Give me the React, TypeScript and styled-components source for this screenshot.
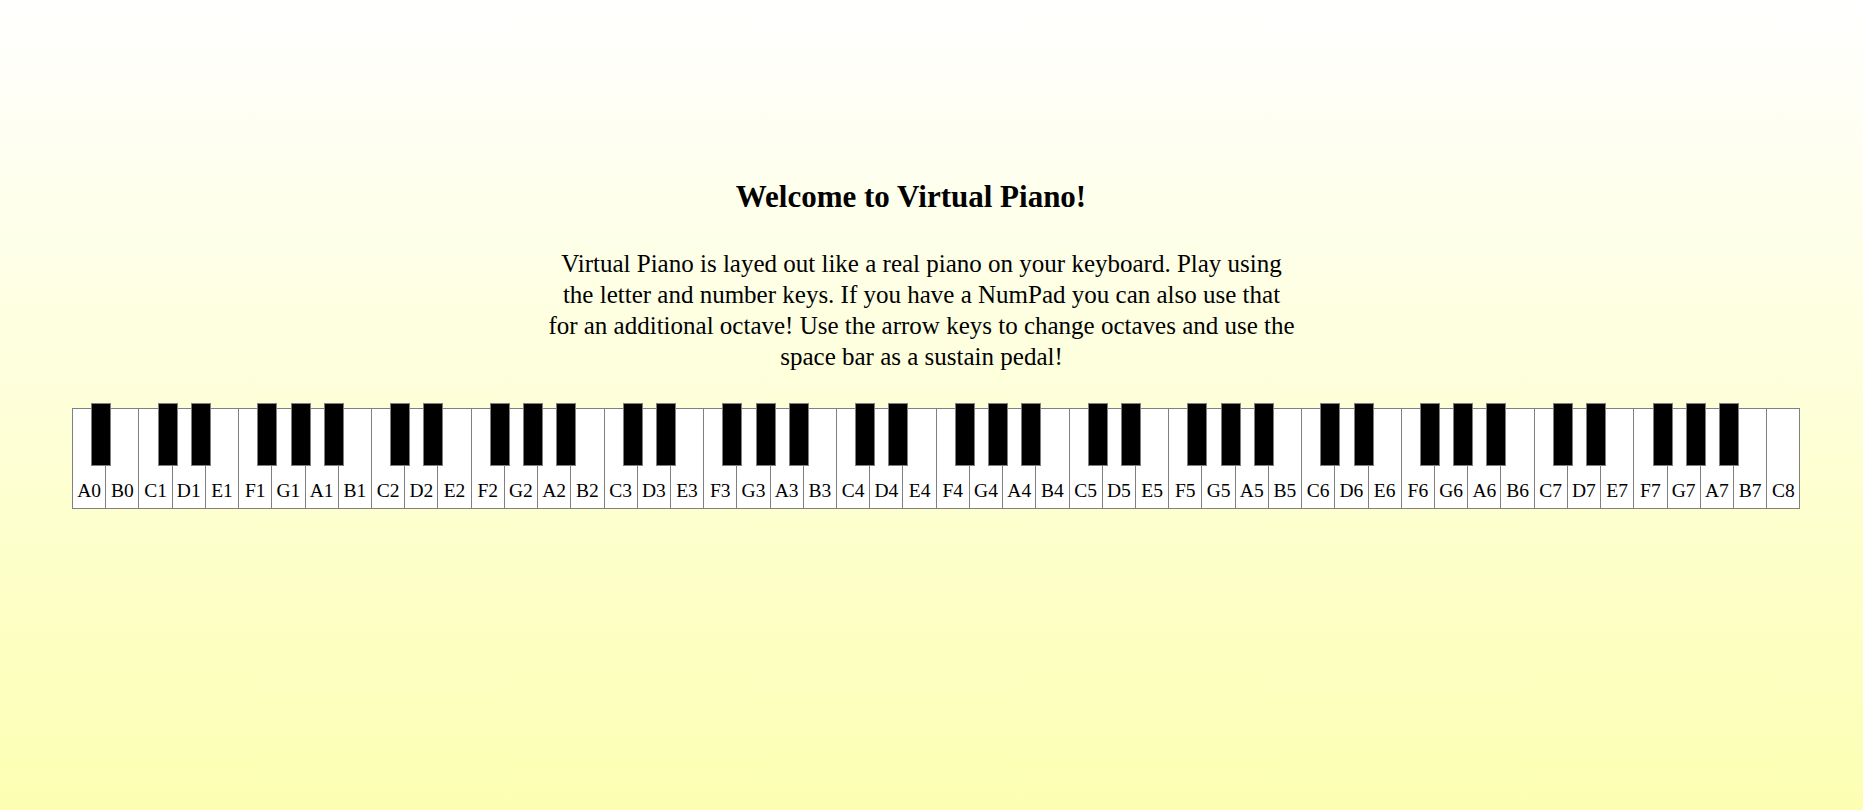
import React from "react";
import styled, { createGlobalStyle } from "styled-components";

const GlobalStyle = createGlobalStyle`
  html, body {
    margin: 0;
    padding: 0;
  }
  body {
    font-family: "Liberation Serif", "Times New Roman", serif;
    color: #000;
    background: #fcffb2;
  }
`;

const Page = styled.div`
  min-height: 100vh;
  box-sizing: border-box;
  padding-top: 179px;
  background: linear-gradient(to bottom, #ffffff 0%, #fcffb2 100%);
  display: flex;
  flex-direction: column;
`;

const Intro = styled.section`
  width: 749px;
  margin-left: 547px;
  display: flex;
  flex-direction: column;
`;

const Title = styled.h2`
  margin: 0;
  padding-right: 21px;
  font-size: 31px;
  font-weight: bold;
  text-align: center;
`;

const Description = styled.p`
  margin: 33px 0 0;
  font-size: 25px;
  line-height: 31px;
  text-align: center;
`;

const Keyboard = styled.div`
  margin: 36px 0 0 72px;
  width: 1728px;
  height: 101px;
  display: flex;
`;

const WhiteKey = styled.div<{ $last?: boolean }>`
  position: relative;
  flex: 1 1 0;
  box-sizing: border-box;
  background: #ffffff;
  border: 1px solid #808080;
  border-right: ${(p) => (p.$last ? "1px solid #808080" : "none")};
  display: flex;
  align-items: flex-end;
  justify-content: center;
  padding-bottom: 6px;
`;

const Label = styled.span`
  font-size: 19.5px;
  line-height: normal;
  white-space: nowrap;
`;

const BlackKey = styled.div`
  position: absolute;
  top: -6px;
  left: calc(100% - 14px);
  width: 20px;
  height: 63px;
  box-sizing: border-box;
  background: #000000;
  border: 1px solid #808080;
  z-index: 1;
`;

const letters = ["C", "D", "E", "F", "G", "A", "B"];
const withSharp = new Set(["C", "D", "F", "G", "A"]);

type WKey = { name: string; sharp: boolean };

const buildKeys = (): WKey[] => {
  const keys: WKey[] = [
    { name: "A0", sharp: true },
    { name: "B0", sharp: false },
  ];
  for (let oct = 1; oct <= 7; oct++) {
    for (const l of letters) {
      keys.push({ name: `${l}${oct}`, sharp: withSharp.has(l) });
    }
  }
  keys.push({ name: "C8", sharp: false });
  return keys;
};

const keys = buildKeys();

export default function App() {
  return (
    <>
      <GlobalStyle />
      <Page>
        <Intro>
          <Title>Welcome to Virtual Piano!</Title>
          <Description>
            Virtual Piano is layed out like a real piano on your keyboard. Play
            using the letter and number keys. If you have a NumPad you can also
            use that for an additional octave! Use the arrow keys to change
            octaves and use the space bar as a sustain pedal!
          </Description>
        </Intro>
        <Keyboard>
          {keys.map((k, i) => (
            <WhiteKey key={k.name} $last={i === keys.length - 1}>
              <Label>{k.name}</Label>
              {k.sharp && <BlackKey />}
            </WhiteKey>
          ))}
        </Keyboard>
      </Page>
    </>
  );
}
